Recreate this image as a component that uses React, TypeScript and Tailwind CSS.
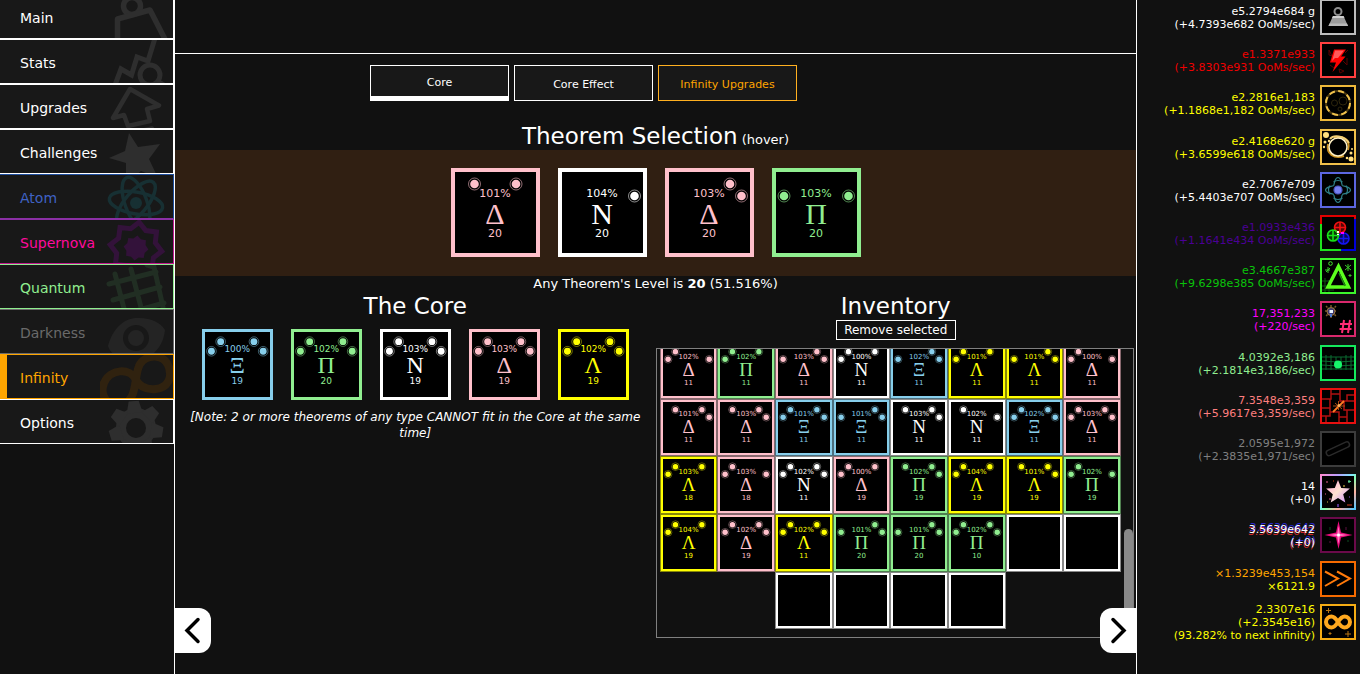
import type { ReactNode } from "react";
import clsx from "clsx";

type Tone = "pink" | "green" | "blue" | "white" | "yellow";
type Size = "lg" | "md" | "sm";

interface Theorem {
  letter: string;
  power: number;
  level: number;
  // left, top left, top right, right
  stars: string;
}

const TONES: Record<Tone, { text: string; border: string; edge: string }> = {
  pink: { text: "text-[#ffc0cb]", border: "border-[#ffc0cb]", edge: "border-[#ffc0cb]/50" },
  green: { text: "text-[#90ee90]", border: "border-[#90ee90]", edge: "border-[#90ee90]/50" },
  blue: { text: "text-[#87ceeb]", border: "border-[#87ceeb]", edge: "border-[#87ceeb]/50" },
  white: { text: "text-white", border: "border-white", edge: "border-white/50" },
  yellow: { text: "text-[#ffff00]", border: "border-[#ffff00]", edge: "border-[#ffff00]/50" },
};

const LETTER_TONE: Record<string, Tone> = {
  "Δ": "pink",
  "Π": "green",
  "Ξ": "blue",
  N: "white",
  "Λ": "yellow",
};

const SIZES: Record<Size, { frame: string; small: string; big: string }> = {
  lg: { frame: "w-[89px] h-[89px] border-4 pt-0.5", small: "text-[11px] leading-[12px]", big: "text-[30px] leading-[28px]" },
  md: { frame: "w-[71px] h-[71px] border-3", small: "text-[9px] leading-[10px]", big: "text-[24px] leading-[22px]" },
  sm: { frame: "w-full h-full border-2", small: "text-[7px] leading-[8px]", big: "text-[19px] leading-[18px]" },
};

const STAR_POS = [
  [12, 28],
  [23.5, 16],
  [65, 16],
  [76.5, 28],
];

const t = (letter: string, power: number, level: number, stars: string): Theorem => ({ letter, power, level, stars });

const SELECTION = [t("Δ", 101, 20, "0110"), t("N", 104, 20, "0001"), t("Δ", 103, 20, "0011"), t("Π", 103, 20, "1001")];

const CORE = [
  t("Ξ", 100, 19, "1111"),
  t("Π", 102, 20, "1111"),
  t("N", 103, 19, "1111"),
  t("Δ", 103, 19, "1111"),
  t("Λ", 102, 19, "1111"),
];

const INVENTORY: (Theorem | null)[] = [
  t("Δ", 102, 11, "1101"),
  t("Π", 102, 11, "1110"),
  t("Δ", 103, 11, "1011"),
  t("N", 100, 11, "1110"),
  t("Ξ", 102, 11, "1011"),
  t("Λ", 101, 11, "1110"),
  t("Λ", 101, 11, "1011"),
  t("Δ", 100, 11, "1101"),
  t("Δ", 101, 11, "0111"),
  t("Δ", 103, 11, "0111"),
  t("Ξ", 101, 11, "1111"),
  t("Ξ", 101, 11, "1011"),
  t("N", 103, 11, "0111"),
  t("N", 102, 11, "0101"),
  t("Ξ", 102, 11, "1111"),
  t("Δ", 103, 11, "1111"),
  t("Λ", 103, 18, "1110"),
  t("Δ", 103, 18, "1101"),
  t("N", 102, 11, "1111"),
  t("Δ", 100, 19, "1110"),
  t("Π", 102, 19, "0111"),
  t("Λ", 104, 19, "1110"),
  t("Λ", 101, 19, "0111"),
  t("Π", 102, 19, "1101"),
  t("Λ", 104, 19, "1110"),
  t("Δ", 102, 19, "1111"),
  t("Λ", 102, 11, "1111"),
  t("Π", 101, 20, "1011"),
  t("Π", 101, 20, "1011"),
  t("Π", 102, 10, "1111"),
  null,
  null,
  null,
  null,
  null,
  null,
];

function TheoremTile({ theorem, size }: { theorem: Theorem | null; size: Size }) {
  const tone = TONES[theorem ? LETTER_TONE[theorem.letter] : "white"];
  const s = SIZES[size];
  return (
    <button className={clsx("relative flex flex-col items-center justify-center bg-black", s.frame, tone.border, tone.text)}>
      {theorem && (
        <>
          <svg viewBox="4 4 81 81" className="absolute inset-0 h-full w-full">
            {STAR_POS.map(([x, y], i) =>
              theorem.stars[i] === "1" ? (
                <g key={i}>
                  <circle cx={x} cy={y} r="4.3" fill="currentColor" />
                  <circle cx={x} cy={y} r="6" fill="none" stroke="currentColor" strokeWidth="0.8" opacity="0.7" />
                </g>
              ) : null
            )}
          </svg>
          <span className={s.small}>{theorem.power}%</span>
          <span className={clsx("font-['Liberation_Serif',serif]", s.big)}>{theorem.letter}</span>
          <span className={s.small}>{theorem.level}</span>
        </>
      )}
    </button>
  );
}

function starPoints(cx: number, cy: number, outer: number, inner: number, n: number, turn = 0) {
  const pts: string[] = [];
  for (let i = 0; i < n * 2; i++) {
    const r = i % 2 ? inner : outer;
    const a = ((i * 180) / n + turn - 90) * (Math.PI / 180);
    pts.push(`${(cx + r * Math.cos(a)).toFixed(1)},${(cy + r * Math.sin(a)).toFixed(1)}`);
  }
  return pts.join(" ");
}

const NAV: { name: string; color: string; art: string; active?: boolean; icon: ReactNode }[] = [
  {
    name: "Main",
    color: "text-white border-white",
    art: "text-[#2e2e2e]",
    icon: (
      <g fill="none" stroke="currentColor" strokeWidth="5.5" strokeLinejoin="round">
        <circle cx="32" cy="11" r="8.5" />
        <path d="M17.5 50V24L50 15L68 50" />
      </g>
    ),
  },
  {
    name: "Stats",
    color: "text-white border-white",
    art: "text-[#2e2e2e]",
    icon: (
      <g fill="none" stroke="currentColor" strokeWidth="5">
        <path d="M15 45L21 29L31.500 35L37 17L48 21L55 -2" />
        <circle cx="50" cy="35" r="10" />
        <path d="M57 41L67 47" />
      </g>
    ),
  },
  {
    name: "Upgrades",
    color: "text-white border-white",
    art: "text-[#2e2e2e]",
    icon: (
      <g fill="none" stroke="currentColor" strokeWidth="4.500" strokeLinejoin="round">
        <path d="M30 4L59 20.500L47 24L50 36L28 41L24 30L13 33Z" />
        <path d="M32 48L52 43.500" strokeLinecap="round" />
      </g>
    ),
  },
  {
    name: "Challenges",
    color: "text-white border-white",
    art: "text-[#2e2e2e]",
    icon: <path fill="currentColor" d="M29 3L38 17L60 14L49 29L58 48L41 41L26 54V33L9 28L25 21Z" />,
  },
  {
    name: "Atom",
    color: "text-[#3f62c4] border-[#1f4fa0] border-b-[#8b2fa5]",
    art: "text-[#173033]",
    icon: (
      <g fill="none" stroke="currentColor" strokeWidth="3.500">
        <circle cx="36" cy="28" r="6" fill="currentColor" stroke="none" />
        <ellipse cx="36" cy="28" rx="27" ry="11" transform="rotate(10 36 28)" />
        <ellipse cx="36" cy="28" rx="27" ry="11" transform="rotate(70 36 28)" />
        <ellipse cx="36" cy="28" rx="27" ry="11" transform="rotate(130 36 28)" />
      </g>
    ),
  },
  {
    name: "Supernova",
    color: "text-[#ff0a9c] border-[#c2188f] border-t-[#8b2fa5]",
    art: "text-[#33123a]",
    icon: (
      <g>
        <polygon points={starPoints(36, 28, 26, 20, 8, 7)} fill="none" stroke="currentColor" strokeWidth="5" />
        <polygon points={starPoints(36, 28, 12.5, 10, 8, 7)} fill="currentColor" />
      </g>
    ),
  },
  {
    name: "Quantum",
    color: "text-[#90ee90] border-[#90ee90]",
    art: "text-[#212e23]",
    icon: (
      <path
        fill="none"
        stroke="currentColor"
        strokeWidth="5"
        strokeLinecap="round"
        d="M9 19L56 7M13 35L60 22M17 51L64 38M15 9L27 55M31 4L43 50M47 0L54 2L63 42"
      />
    ),
  },
  {
    name: "Darkness",
    color: "text-[#6a6a6a] border-[#6a6a6a]",
    art: "text-[#242424]",
    icon: (
      <g>
        <path fill="currentColor" d="M8 36C13 17 26 7 39 8C52 8 61 13 65 20C63 40 48 52 30 51C18 49 10 43 8 36Z" />
        <circle cx="36" cy="28" r="10.500" fill="none" stroke="#181818" strokeWidth="5" />
      </g>
    ),
  },
  {
    name: "Infinity",
    color: "text-[#ffa500] border-[#ffa500]",
    art: "text-[#30220f]",
    active: true,
    icon: (
      <path
        fill="none"
        stroke="currentColor"
        strokeWidth="8"
        d="M36 25C30 12 10 14 4 28C-2 44 14 56 26 48C38 40 34 18 40 9C46 0 62 -2 68 10C74 24 66 33 56 34C46 35 40 32 36 25Z"
      />
    ),
  },
  {
    name: "Options",
    color: "text-white border-white",
    art: "text-[#2e2e2e]",
    icon: (
      <g>
        <path
          fill="none"
          stroke="currentColor"
          strokeWidth="10"
          d="M36 28m-15 0a15 15 0 1 0 30 0a15 15 0 1 0 -30 0"
        />
        {[-5, 47, 99, 150, 201, 253, 304].map((a) => (
          <path key={a} fill="currentColor" d="M28 13L31 1H41L44 13Z" transform={`rotate(${a} 36 28)`} />
        ))}
      </g>
    ),
  },
];

const RESOURCES: { lines: [string, string][]; frame: string; icon: ReactNode }[] = [
  {
    lines: [
      ["e5.2794e684 g", "text-white"],
      ["(+4.7393e682 OoMs/sec)", "text-white"],
    ],
    frame: "#bdbdbd",
    icon: (
      <g>
        <circle cx="18" cy="12.500" r="3.500" fill="none" stroke="#8d8d8d" strokeWidth="2" />
        <path d="M13 17H23.500L28 27H8.500Z" fill="#9b9b9b" />
        <path d="M13 17H23.500L24.500 19H12Z" fill="#cfcfcf" />
        <path d="M9.500 24.500H27L28 27H8.500Z" fill="#b8b8b8" />
      </g>
    ),
  },
  {
    lines: [
      ["e1.3371e933", "text-[#f00000]"],
      ["(+3.8303e931 OoMs/sec)", "text-[#f00000]"],
    ],
    frame: "#ff3f3f",
    icon: (
      <g>
        <path
          d="M9 8L12 14M9 8V13L12 14M27 16V23L23 19M10 23L14 26M19 27L24 29L20 31ZM28 8L25 11"
          fill="none"
          stroke="#5a0000"
        />
        <path d="M14 7.500H26L21 14.500H25.500L12.500 30L16 20.500H10Z" fill="#f00" />
        <path d="M15 8.500H24L18 16H15L12 19Z" fill="#ff5a5a" />
      </g>
    ),
  },
  {
    lines: [
      ["e2.2816e1,183", "text-[#ffff00]"],
      ["(+1.1868e1,182 OoMs/sec)", "text-[#ffff00]"],
    ],
    frame: "#edb83a",
    icon: (
      <g fill="none">
        <circle cx="18" cy="18" r="12" stroke="#4d3a10" strokeWidth="2" />
        <circle cx="18" cy="18" r="12" stroke="#eec04c" strokeWidth="2" strokeDasharray="6 3.400" />
        <circle cx="14.500" cy="18" r="3" stroke="#2e260c" />
        <circle cx="23" cy="16" r="4" stroke="#2e260c" />
        <circle cx="20" cy="24" r="2" stroke="#2e260c" />
      </g>
    ),
  },
  {
    lines: [
      ["e2.4168e620 g", "text-[#ffff00]"],
      ["(+3.6599e618 OoMs/sec)", "text-[#ffff00]"],
    ],
    frame: "#f0c04a",
    icon: (
      <g fill="none">
        <path d="M8 15C6 25 14 30 24 27M28 21C31 11 23 6 14 9" stroke="#c98f1e" strokeWidth="2" />
        <path d="M10 10C13 6 24 6 29 14" stroke="#f3cf77" strokeWidth="2" />
        <circle cx="18" cy="18" r="9" stroke="#fff0c4" strokeWidth="1.500" />
        <g fill="#ffdf80">
          <circle cx="6" cy="6" r="3" />
          <circle cx="5" cy="13" r="1.500" />
          <circle cx="4" cy="18" r="1.200" />
          <circle cx="9" cy="12" r="1.200" />
          <circle cx="31" cy="30" r="2.500" />
          <circle cx="31" cy="24" r="1.500" />
          <circle cx="27" cy="29" r="1.300" />
          <circle cx="32" cy="20" r="1" />
        </g>
      </g>
    ),
  },
  {
    lines: [
      ["e2.7067e709", "text-white"],
      ["(+5.4403e707 OoMs/sec)", "text-white"],
    ],
    frame: "#5c66e0",
    icon: (
      <g fill="none" stroke="#2f8088" strokeWidth="1.200">
        <ellipse cx="18" cy="18" rx="12.500" ry="4.500" />
        <ellipse cx="18" cy="18" rx="4.500" ry="12.500" />
        <path d="M10 13.500Q7 18 10 22.500M26 13.500Q29 18 26 22.500M13.500 10Q18 7 22.500 10M13.500 26Q18 29 22.500 26" />
        <circle cx="18" cy="18" r="6" fill="#000" stroke="none" />
        <circle cx="18" cy="18" r="4" fill="#7680f0" stroke="#4a54c0" />
      </g>
    ),
  },
  {
    lines: [
      ["e1.0933e436", "text-[#4b0096]"],
      ["(+1.1641e434 OoMs/sec)", "text-[#4b0096]"],
    ],
    frame: "#e00000",
    icon: (
      <g fill="none" strokeWidth="2">
        <path d="M1 9V35H21" stroke="#1ee01e" />
        <path d="M21 35H35V4" stroke="#0000d8" />
        <g strokeWidth="1.600">
          <path d="M20 7V18M14.500 12.500H25.500" stroke="#f01010" />
          <circle cx="20" cy="12.500" r="5.500" stroke="#f01010" fill="#f01010" fillOpacity="0.350" />
          <path d="M23.500 18V29M18 23.500H29" stroke="#1414f0" />
          <circle cx="23.500" cy="23.500" r="5.500" stroke="#1414f0" fill="#1414f0" fillOpacity="0.350" />
          <path d="M13 15V26M7.500 20.500H18.500" stroke="#18e018" />
          <circle cx="13" cy="20.500" r="5.500" stroke="#18e018" fill="#18e018" fillOpacity="0.250" />
        </g>
        <path d="M17 17H19M18 19V20" stroke="#ffe" />
        <path d="M21 18H24" stroke="#f0f" />
      </g>
    ),
  },
  {
    lines: [
      ["e3.4667e387", "text-[#0ac40a]"],
      ["(+9.6298e385 OoMs/sec)", "text-[#0ac40a]"],
    ],
    frame: "#3cf52c",
    icon: (
      <g fill="none">
        <path d="M2 23H12M2 28H10M2 32H14M5 20V34M9 22V34" stroke="#0f5a12" />
        <path d="M18.500 8.500L28.500 29H8Z" stroke="#5cff1e" strokeWidth="3.500" />
        <path d="M19 15L25 28" stroke="#1f8a14" strokeWidth="1.500" />
        <path
          d="M28 6V13M25 7L31 12M31 7L25 12M30 16V19M28.500 17.500H31.500M8 9V15M5 12H10M6 14L10 10"
          stroke="#38c828"
        />
        <circle cx="10.500" cy="5.500" r="1.800" stroke="#48e830" />
      </g>
    ),
  },
  {
    lines: [
      ["17,351,233", "text-[#ff00ff]"],
      ["(+220/sec)", "text-[#ff00ff]"],
    ],
    frame: "#d8286c",
    icon: (
      <g fill="none">
        <path d="M11 4V17M5 10H17M6 5L16 15M16 5L6 15" stroke="#7a5a2a" strokeWidth="1.500" strokeDasharray="2 1" />
        <circle cx="11" cy="10.500" r="4" fill="#3f3a70" stroke="#a07838" />
        <path d="M9.500 9H13V12H9.500Z" fill="#e8f2ff" />
        <path d="M11 13V16" stroke="#4a78d0" strokeWidth="2" />
        <path d="M24 19L22 32M30 19L28 32M20 23H32M19.500 28H31.500" stroke="#ff2c74" strokeWidth="2" />
      </g>
    ),
  },
  {
    lines: [
      ["4.0392e3,186", "text-[#90ee90]"],
      ["(+2.1814e3,186/sec)", "text-[#90ee90]"],
    ],
    frame: "#14e85c",
    icon: (
      <g fill="none">
        <path
          d="M2 12H34M2 16Q18 18 34 16M2 20Q18 22 34 20M2 24H34M6 10V25M11 10V25M16 12V25M21 12V25M26 10V25M31 10V25"
          stroke="#0b6b30"
        />
        <circle cx="18" cy="19.500" r="4" fill="#16f56a" />
      </g>
    ),
  },
  {
    lines: [
      ["7.3548e3,359", "text-[#ff7f7f]"],
      ["(+5.9617e3,359/sec)", "text-[#ff7f7f]"],
    ],
    frame: "#e81010",
    icon: (
      <g fill="none">
        <path
          d="M2 11H11V2M11 6H20V2M20 6V13H34M27 13V7H34M2 20H10V11M10 20V28H2M10 24H19V34M19 29H27V22H34M27 29V34M24 13V22H27M6 28V34"
          stroke="#b01010"
          strokeWidth="1.500"
        />
        <path d="M13 24L24 13" stroke="#ff7a22" strokeWidth="1.800" />
        <path d="M15 15L22 21M18.500 13V22M13 18H25" stroke="#a84a14" />
        <circle cx="19" cy="17.500" r="1.500" fill="#ffb45a" />
      </g>
    ),
  },
  {
    lines: [
      ["2.0595e1,972", "text-[#808080]"],
      ["(+2.3835e1,971/sec)", "text-[#808080]"],
    ],
    frame: "#3c3c3c",
    icon: (
      <rect x="5.500" y="15" width="25" height="5.500" rx="2.700" fill="none" stroke="#2a2a2a" strokeWidth="1.500" transform="rotate(-25 18 18)" />
    ),
  },
  {
    lines: [
      ["14", "text-white"],
      ["(+0)", "text-white"],
    ],
    frame: "url(#rainbow)",
    icon: (
      <g>
        <defs>
          <linearGradient id="rainbow" x1="0" y1="0" x2="1" y2="1">
            <stop offset="0" stopColor="#ff8ad0" />
            <stop offset="0.250" stopColor="#b9a0ff" />
            <stop offset="0.450" stopColor="#7fe8ff" />
            <stop offset="0.550" stopColor="#8affb0" />
            <stop offset="0.750" stopColor="#ffb0a0" />
            <stop offset="1" stopColor="#50c8ff" />
          </linearGradient>
          <linearGradient id="starFill" x1="0" y1="0" x2="1" y2="1">
            <stop offset="0" stopColor="#ff9ad8" />
            <stop offset="0.500" stopColor="#ffe2d0" />
            <stop offset="1" stopColor="#c88aff" />
          </linearGradient>
        </defs>
        <polygon points={starPoints(18, 18.5, 12.5, 5.5, 5)} fill="url(#starFill)" />
        <g fill="none" strokeWidth="1.200">
          <path d="M6 8H8M9 25H11M5 20H6" stroke="#e05a8a" />
          <path d="M29 6V9M28 7.500H31" stroke="#5ad08a" />
          <path d="M24 11V13M7 28H8" stroke="#c8b040" />
          <path d="M27 31H32M13 7H14" stroke="#d04020" />
          <path d="M18 30V33M29 23H30" stroke="#8a50e0" />
        </g>
      </g>
    ),
  },
  {
    lines: [
      ["3.5639e642", "text-white [text-shadow:1px_-2px_#2a2ad0,-1px_2px_#d02a2a]"],
      ["(+0)", "text-white [text-shadow:1px_-2px_#2a2ad0,-1px_2px_#d02a2a]"],
    ],
    frame: "#6b0a4a",
    icon: (
      <g>
        <polygon points={starPoints(18.5, 18, 14, 3.5, 4)} fill="#e80a7c" />
        <polygon points={starPoints(18.5, 18, 9, 1.8, 4)} fill="#ff7ac0" />
        <circle cx="18.500" cy="18" r="1.500" fill="#fff" />
        <path d="M10 10V13M28 23V25" stroke="#0c4a20" />
        <path d="M26 10V13M9 25H11" stroke="#5a1040" />
      </g>
    ),
  },
  {
    lines: [
      ["×1.3239e453,154", "text-[#ffa500]"],
      ["×6121.9", "text-[#ffff00]"],
    ],
    frame: "#f56a00",
    icon: <path d="M5 10.500L18 17.500L5 25M17 10.500L30 17.500L17 25" fill="none" stroke="#ff7a0a" strokeWidth="2" />,
  },
  {
    lines: [
      ["2.3307e16", "text-[#ffff00]"],
      ["(+2.3545e16)", "text-[#ffff00]"],
      ["(93.282% to next infinity)", "text-[#ffff00]"],
    ],
    frame: "#f5ac14",
    icon: (
      <g fill="none">
        <path
          d="M18 18C15.500 14 14 12.500 11.500 12.500A5.500 5.500 0 1 0 11.500 23.500C14 23.500 15.500 22 18 18C20.500 14 22 12.500 24.500 12.500A5.500 5.500 0 1 1 24.500 23.500C22 23.500 20.500 22 18 18Z"
          stroke="#ffa81e"
          strokeWidth="4"
        />
        <path d="M8.500 4V9M6 6.500H11M10 28V31M8.500 29.500H11.500M28 27V33M25 30H31" stroke="#b87412" />
      </g>
    ),
  },
];

function ResourceIcon({ frame, children }: { frame: string; children: ReactNode }) {
  return (
    <svg viewBox="0 0 36 36" className="h-9 w-9 shrink-0">
      <rect x="0" y="0" width="36" height="36" fill="#000" />
      <rect x="1" y="1" width="34" height="34" fill="none" stroke={frame} strokeWidth="2" />
      {children}
    </svg>
  );
}

export default function App() {
  return (
    <div className="flex h-screen overflow-hidden bg-[#111] font-['DejaVu_Sans',sans-serif] text-[13px] leading-4 text-white">
      <nav className="w-[174px] shrink-0">
        <div className="-mt-[6px] flex flex-col">
          {NAV.map((item) => (
            <button
              key={item.name}
              className={clsx(
                "relative flex h-[45px] items-center overflow-hidden border-y border-r bg-[#181818] pt-0.5 text-left text-[14px]",
                item.color,
                item.active ? "border-l-[7px] pl-[13px]" : "pl-5"
              )}
            >
              <svg viewBox="0 0 73 43" className={clsx("absolute top-0 right-0 h-[43px] w-[73px]", item.art)}>
                {item.icon}
              </svg>
              <span className="relative">{item.name}</span>
            </button>
          ))}
        </div>
      </nav>

      <main className="relative min-w-0 flex-1 border-x border-white">
        <div className="h-[54px] border-b border-white" />

        <div className="grid grid-cols-[repeat(4,139px)] justify-center gap-[5px] pt-[11px] text-[11px]">
          <button className="h-9 border border-b-[5px] border-white bg-[#181818] pt-[3px]">Core</button>
          <button className="h-9 border border-white bg-[#181818] pt-[3px]">Core Effect</button>
          <button className="h-9 border border-[#ffb020] bg-[#181818] pt-[3px] text-[#ffa500]">Infinity Upgrades</button>
        </div>

        <h2 className="mt-[21px] text-center text-[23px] leading-7">
          Theorem Selection<span className="ml-1 text-[13px] leading-none">(hover)</span>
        </h2>
        <div className="flex justify-center gap-[18px] bg-[#301f12] pt-[18px] pb-[19px]">
          {SELECTION.map((theorem, i) => (
            <TheoremTile key={i} theorem={theorem} size="lg" />
          ))}
        </div>
        <p className="text-center">
          Any Theorem's Level is <b>20</b> (51.516%)
        </p>

        <div className="grid grid-cols-2">
          <section>
            <h2 className="text-center text-[23px] leading-7">The Core</h2>
            <div className="flex justify-center gap-[18px] py-[9px]">
              {CORE.map((theorem, i) => (
                <TheoremTile key={i} theorem={theorem} size="md" />
              ))}
            </div>
            <p className="text-center text-[12px] italic">
              [Note: 2 or more theorems of any type CANNOT fit in the Core at the same time]
            </p>
          </section>

          <section className="flex flex-col items-center">
            <h2 className="text-[23px] leading-7">Inventory</h2>
            <button className="h-5 w-[120px] border border-white bg-[#111] text-[12px] leading-[18px]">
              Remove selected
            </button>
            <div className="mt-2 mr-[2px] flex h-[290px] self-stretch border border-[#808080]">
              <div className="flex flex-1 items-start justify-center overflow-hidden">
                <div className="-mt-2 grid w-[461px] grid-cols-8">
                  {INVENTORY.map((theorem, i) => (
                    <div
                      key={i}
                      className={clsx(
                        "aspect-square border",
                        TONES[theorem ? LETTER_TONE[theorem.letter] : "white"].edge,
                        i === 32 && "col-start-3"
                      )}
                    >
                      <TheoremTile theorem={theorem} size="sm" />
                    </div>
                  ))}
                </div>
              </div>
              <div className="flex w-[9px] flex-col justify-end">
                <div className="h-[108px] rounded-full bg-[#888]" />
              </div>
            </div>
          </section>
        </div>

        <button
          aria-label="Previous"
          className="absolute bottom-[21px] left-0 flex h-[45px] w-9 items-center justify-center rounded-r-xl bg-white"
        >
          <svg viewBox="0 0 36 45" className="h-[45px] w-9" fill="none" stroke="#000" strokeWidth="3.500" strokeLinecap="round">
            <path d="M23 11.500L12 22.500L23 33.500" />
          </svg>
        </button>
        <button
          aria-label="Next"
          className="absolute right-0 bottom-[21px] flex h-[45px] w-9 items-center justify-center rounded-l-xl bg-white"
        >
          <svg viewBox="0 0 36 45" className="h-[45px] w-9" fill="none" stroke="#000" strokeWidth="3.500" strokeLinecap="round">
            <path d="M13 11.500L24 22.500L13 33.500" />
          </svg>
        </button>
      </main>

      <aside className="-mt-px flex h-[641px] w-[223px] shrink-0 flex-col justify-between pr-1">
        {RESOURCES.map((res) => (
          <div key={res.lines[0][0]} className="flex h-9 items-center justify-end gap-[5px]">
            <div className="pt-0.5 text-right text-[11px] leading-[13px] whitespace-nowrap">
              {res.lines.map(([text, color]) => (
                <div key={text} className={color}>
                  {text}
                </div>
              ))}
            </div>
            <ResourceIcon frame={res.frame}>{res.icon}</ResourceIcon>
          </div>
        ))}
      </aside>
    </div>
  );
}
